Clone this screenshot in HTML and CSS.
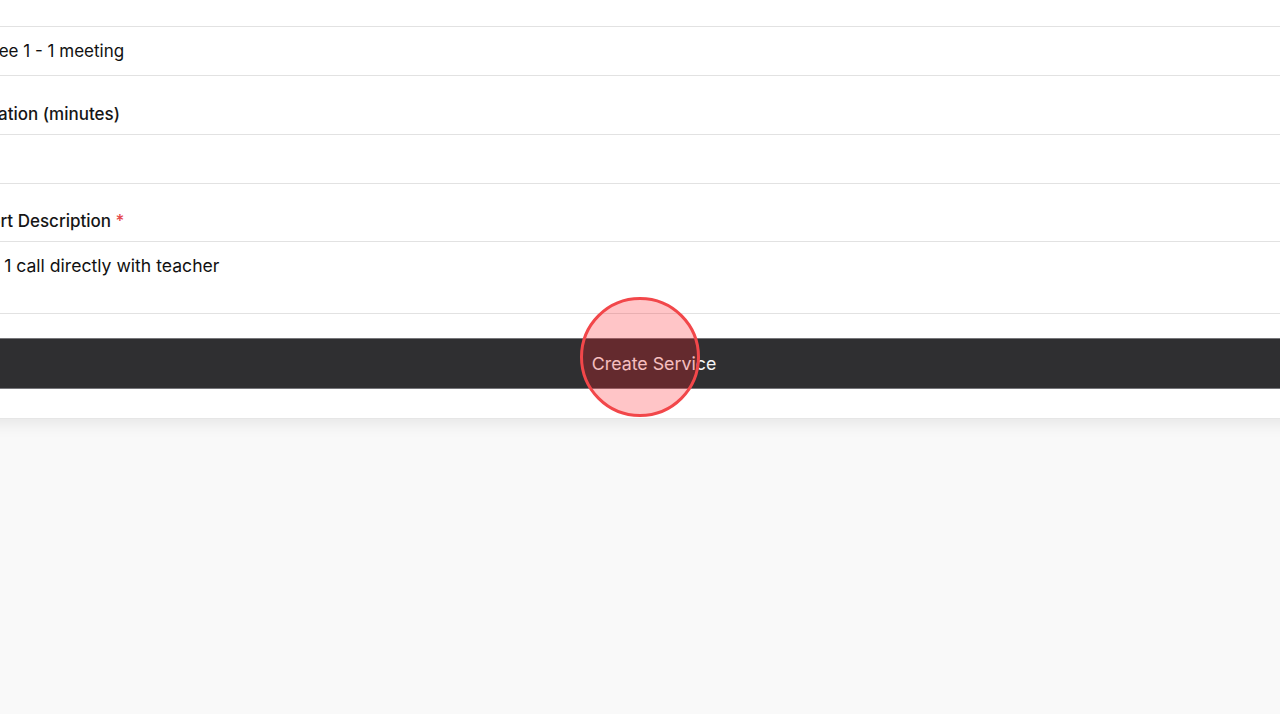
FILE: index.html
```html
<!DOCTYPE html>
<html lang="en">
<head>
<meta charset="utf-8">
<title>Create Service</title>
<link rel="stylesheet" href="styles.css">
</head>
<body>
<div class="page">
  <form class="card">
    <div class="field">
      <div class="input">Free 1 - 1 meeting</div>
    </div>
    <div class="field">
      <label class="label">Duration (minutes)</label>
      <div class="input"></div>
    </div>
    <div class="field field-desc">
      <label class="label">Short Description <span class="req">*</span></label>
      <div class="input textarea">1 - 1 call directly with teacher</div>
    </div>
    <button type="button" class="submit">Create Service</button>
  </form>
  <div class="click-marker"></div>
</div>
</body>
</html>
```

FILE: styles.css
```css
html, body {
  margin: 0;
  padding: 0;
  height: 100%;
  overflow: hidden;
  background: #f9f9f9;
  font-family: Inter, "Noto Sans", sans-serif;
  color: #111;
}
.page {
  position: relative;
  height: 714px;
}
.card {
  box-sizing: border-box;
  margin-left: -60px;
  width: 1428px;
  background: #fff;
  padding: 26px 0 29px;
  border-bottom: 1px solid #e6e6e6;
  box-shadow: 0 6px 14px rgba(0, 0, 0, 0.07);
  display: flex;
  flex-direction: column;
}
.field {
  display: flex;
  flex-direction: column;
}
.field + .field {
  margin-top: 26px;
}
.field-desc.field {
  margin-top: 25px;
}
.label {
  font-size: 17px;
  font-weight: 500;
  line-height: 24px;
  padding-left: 29px;
  margin-bottom: 8px;
  color: #161616;
}
.req {
  color: #e5484d;
}
.input {
  box-sizing: border-box;
  height: 50px;
  border-top: 1px solid #e2e2e2;
  border-bottom: 1px solid #e2e2e2;
  font-size: 17px;
  line-height: 24px;
  padding: 12px 0 0 43px;
}
.textarea {
  height: 73px;
  padding: 12px 0 0 39px;
  font-size: 17.6px;
}
.submit {
  margin-top: 24px;
  height: 51px;
  box-sizing: border-box;
  background: #2f2f31;
  border: none;
  border-top: 1px solid #76767a;
  border-bottom: 1px solid #76767a;
  color: #f4f4f4;
  font-family: Inter, "Noto Sans", sans-serif;
  font-size: 17.8px;
  padding: 0;
}
.click-marker {
  position: absolute;
  left: 580px;
  top: 297px;
  width: 114px;
  height: 114px;
  border-radius: 50%;
  border: 3px solid #f2474a;
  background: rgba(255, 30, 40, 0.26);
}
```
